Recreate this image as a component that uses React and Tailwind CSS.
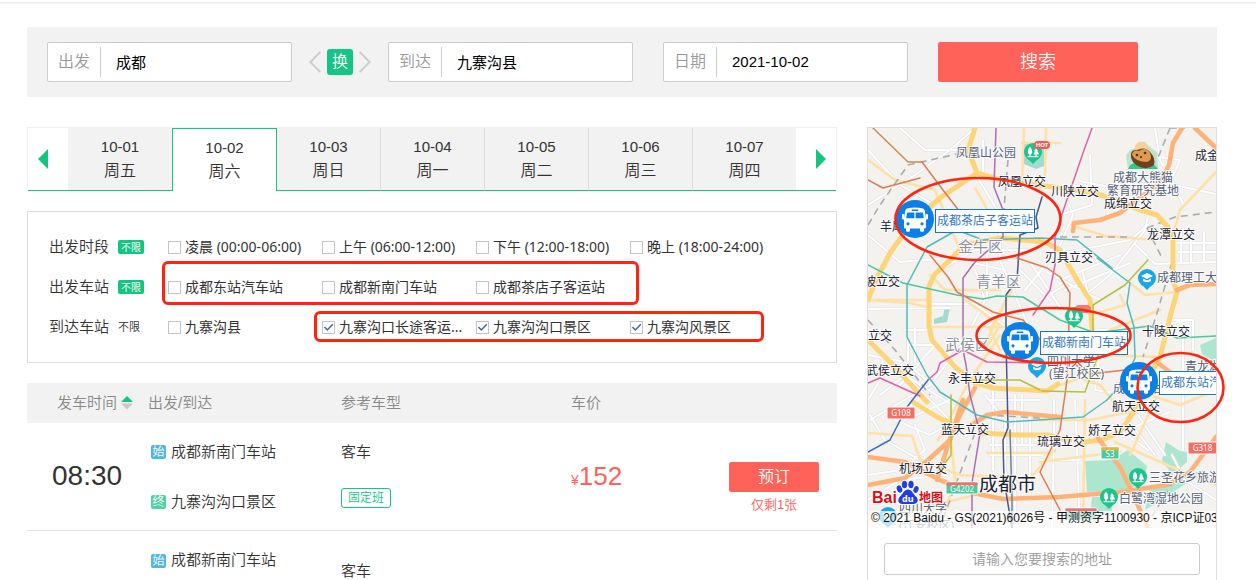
import React, { useState } from "react";

const CJK = "font-['Liberation_Sans','Noto_Sans_CJK_SC',sans-serif]";
const NOTO = "font-['Noto_Sans','Noto_Sans_CJK_SC',sans-serif]";

function Field({ id, label, value }) {
  return (
    <div className="flex h-10 w-[245px] items-center rounded-xs border border-[#ccc] bg-white">
      <label htmlFor={id} className="flex h-[30px] w-[53px] shrink-0 items-center justify-center border-r border-[#ccc] text-base text-[#999]">
        {label}
      </label>
      <input id={id} type="text" defaultValue={value} className="h-full min-w-0 flex-1 bg-transparent pb-[2px] pl-[15px] text-[15px] font-normal text-black outline-none" />
    </div>
  );
}

function Chevron({ d }) {
  return (
    <svg width="12" height="22" viewBox="0 0 12 22" fill="none" stroke="#ccc" strokeWidth="2" aria-hidden="true">
      <path d={d} />
    </svg>
  );
}

function SearchBar() {
  return (
    <form className="flex h-[70px] items-center bg-[#f2f2f2] px-5" onSubmit={(e) => e.preventDefault()}>
      <Field id="from" label="出发" value="成都" />
      <button type="button" aria-label="换" className="flex w-24 items-center justify-center gap-[6px]">
        <Chevron d="M11.3 1 L1.3 11 L11.3 21" />
        <span className="flex size-[26px] items-center justify-center rounded-[3px] bg-[#14c585] text-base text-white">换</span>
        <Chevron d="M0.7 1 L10.7 11 L0.7 21" />
      </button>
      <Field id="to" label="到达" value="九寨沟县" />
      <div className="w-[30px]" />
      <Field id="date" label="日期" value="2021-10-02" />
      <button type="submit" className="ml-[30px] h-10 w-[200px] rounded-xs bg-[#ff6259] text-lg text-white">搜索</button>
    </form>
  );
}

const days = [
  ["10-01", "周五"],
  ["10-02", "周六"],
  ["10-03", "周日"],
  ["10-04", "周一"],
  ["10-05", "周二"],
  ["10-06", "周三"],
  ["10-07", "周四"],
];

function DateTabs() {
  const [active, setActive] = useState(1);
  return (
    <div className="flex h-16 border-x border-t border-[#eee]">
      <button type="button" aria-label="前一天" className="flex w-10 items-center border-b border-[#14c585] pl-[10px]">
        <svg width="10" height="20" viewBox="0 0 10 20" fill="#14c57f"><path d="M0 10 L10 0 V20 Z" /></svg>
      </button>
      <div className="grid flex-1 grid-cols-7">
        {days.map(([date, week], i) => {
          let look = "border-b border-b-[#14c585] bg-[#f2f2f2]";
          if (i === active) look = "border-t border-l border-[#14c585] bg-white";
          else if (i === active + 1) look += " border-l border-l-[#14c585]";
          else if (i > 0) look += " border-l border-l-[#ddd]";
          return (
            <button key={date} type="button" onClick={() => setActive(i)} aria-pressed={i === active} className={"flex flex-col items-center pt-[7px] text-[#333] " + look}>
              <span className="text-[15px] leading-6">{date}</span>
              <span className="text-base leading-6">{week}</span>
            </button>
          );
        })}
      </div>
      <button type="button" aria-label="后一天" className="flex w-10 items-center justify-end border-b border-[#14c585] pr-[10px]">
        <svg width="10" height="20" viewBox="0 0 10 20" fill="#14c57f"><path d="M10 10 L0 0 V20 Z" /></svg>
      </button>
    </div>
  );
}

function Option({ label, checked }) {
  return (
    <label className="flex w-[154px] items-center gap-1">
      <span className="relative flex size-[13px] shrink-0">
        <input type="checkbox" defaultChecked={checked} className="peer size-[13px] appearance-none border border-[#c4c4c4] bg-white" />
        <svg viewBox="0 0 13 13" className="pointer-events-none absolute inset-0 hidden size-[13px] peer-checked:block" fill="none" stroke="#4a64a0" strokeWidth="1.5">
          <path d="M2.5 6 L5.3 9 L10.8 3.2" />
        </svg>
      </span>
      <span className={"text-sm font-normal whitespace-nowrap " + NOTO}>{label}</span>
    </label>
  );
}

function FilterRow({ title, allOn, children }) {
  return (
    <div className="flex h-10 items-center">
      <div className="w-[69px] shrink-0 text-[15px]">{title}</div>
      <div className="w-[50px] shrink-0">
        <button type="button" className={allOn ? "flex h-[14px] w-[26px] items-center justify-center rounded-xs bg-[#14c57f] text-[10px] font-normal text-white" : "block text-[11px] leading-4"}>
          不限
        </button>
      </div>
      <div className="relative flex">{children}</div>
    </div>
  );
}

function Filters() {
  const mark = "pointer-events-none absolute rounded-md border-3 border-[#ff2410]";
  return (
    <section className="mt-5 border border-[#ddd] px-[21px] pt-[15px] pb-[15px] text-[#333]">
      <FilterRow title="出发时段" allOn>
        <Option label="凌晨 (00:00-06:00)" />
        <Option label="上午 (06:00-12:00)" />
        <Option label="下午 (12:00-18:00)" />
        <Option label="晚上 (18:00-24:00)" />
      </FilterRow>
      <FilterRow title="出发车站" allOn>
        <Option label="成都东站汽车站" />
        <Option label="成都新南门车站" />
        <Option label="成都茶店子客运站" />
        <div className={mark + " -top-4 -left-[6px] h-11 w-[477px]"} />
      </FilterRow>
      <FilterRow title="到达车站">
        <Option label="九寨沟县" />
        <Option label="九寨沟口长途客运..." checked />
        <Option label="九寨沟沟口景区" checked />
        <Option label="九寨沟风景区" checked />
        <div className={mark + " -top-[6px] left-[146px] h-[31px] w-[450px]"} />
      </FilterRow>
    </section>
  );
}

function Stop({ tag, name, color }) {
  return (
    <div className="flex h-[22px] items-center gap-[5px] pl-[3px]">
      <span className={"flex h-[14px] w-[15px] items-center justify-center rounded-xs text-xs text-white " + color}>{tag}</span>
      {name}
    </div>
  );
}

function Results() {
  return (
    <table className="mt-5 w-full table-fixed text-left text-[15px] text-[#333]">
      <colgroup>
        <col className="w-[121px]" />
        <col className="w-[193px]" />
        <col className="w-[230px]" />
        <col />
        <col className="w-[108px]" />
      </colgroup>
      <thead>
        <tr className="h-10 bg-[#f2f2f2] text-[#888]">
          <th className="p-0 pl-[30px] font-[350]">
            <button type="button" className="flex items-center gap-1">
              发车时间
              <svg width="12" height="14" viewBox="0 0 12 14" className="shrink-0"><path d="M6 0 L12 6 H0 Z" fill="#14c57f" /><path d="M0 7.5 H12 L6 13.5 Z" fill="#c8c8c8" /></svg>
            </button>
          </th>
          <th className="p-0 font-[350]">出发/到达</th>
          <th className="p-0 font-[350]">参考车型</th>
          <th className="p-0 font-[350]">车价</th>
          <th className="p-0"></th>
        </tr>
      </thead>
      <tbody>
        <tr className="h-[107px] border-b border-[#e6e6e6]">
          <td className="pl-[25px] text-[28px]">08:30</td>
          <td className="align-top pt-[18px]">
            <Stop tag="始" name="成都新南门车站" color="bg-[#4fb5ea]" />
            <div className="h-7" />
            <Stop tag="终" name="九寨沟沟口景区" color="bg-[#4fd3a4]" />
          </td>
          <td className="align-top pt-[18px]">
            <div className="leading-[22px]">客车</div>
            <div className="mt-[25px] flex h-5 w-[50px] items-center justify-center rounded-[3px] border border-[#14c57f] text-xs text-[#14c57f]">固定班</div>
          </td>
          <td className="text-[#ff6259]">
            <span className="text-sm">¥</span><span className="text-[26px]">152</span>
          </td>
          <td className="pr-[18px] text-center align-top pt-[39px]">
            <button type="button" className="block h-[30px] w-full rounded-xs bg-[#ff6259] text-base text-white">预订</button>
            <div className="mt-[3px] text-[13px] leading-5 text-[#ff6259]">仅剩1张</div>
          </td>
        </tr>
        <tr>
          <td></td>
          <td className="align-top pt-[19px]">
            <Stop tag="始" name="成都新南门车站" color="bg-[#4fb5ea]" />
          </td>
          <td className="pt-[29px] leading-[22px]">客车</td>
          <td></td>
          <td></td>
        </tr>
      </tbody>
    </table>
  );
}

/* Map drawing: all coordinates share the map's own view box. */
const BOX = "868 128 348 400";

const minorRoads = [
  "M868 205 L915 175 L950 150 L975 128", "M868 235 L900 262 L950 258 L1005 270", "M900 128 L925 150 L968 150", "M868 150 L900 185 L935 205",
  "M880 270 L905 232 L925 240", "M975 173 L1000 215 L1000 260 L1030 330", "M983 140 V176 H994", "M940 270 L975 250 L1035 250", "M932 304 H975 L1010 330", "M868 309 L950 308",
  "M868 355 L905 362 L950 400 L905 420", "M908 340 V380", "M900 385 L935 345", "M870 420 L930 385 L965 340", "M890 360 L950 420", "M880 395 L905 375 L960 410",
  "M915 328 V362", "M905 330 H930", "M908 345 H935", "M868 400 L885 372", "M1063 190 L1073 215 L1060 245", "M1080 181 L1110 187 L1150 180 L1216 194", "M1090 155 L1092 205 L1060 215",
  "M1155 128 L1160 160 L1172 180 L1185 208", "M1145 155 L1180 160 L1172 178", "M1063 253 L1130 240 L1148 225", "M1148 215 L1145 230 L1110 275 L1085 295", "M1135 244 L1155 264 L1216 262",
  "M1175 243 H1216", "M1178 252 H1216", "M1181 232 V262", "M1191 232 V262", "M1204 232 V262", "M1060 280 L1120 255", "M1065 290 L1130 263", "M1047 272 L1100 300",
  "M1082 270 L1090 300", "M1090 331 L1155 326 L1190 320", "M1172 320 H1193 V350", "M1183 330 V450", "M1100 350 L1095 390 L1130 395", "M985 395 L1005 420 L1005 500", "M1015 395 V520",
  "M993 388 V470", "M1022 395 V445", "M990 400 H1040", "M990 455 H1042", "M990 445 H1040", "M1030 412 V500", "M1054 400 V440 L1052 528", "M868 475 L900 470 L925 450 L915 425", "M868 500 L900 480 L945 475",
  "M870 415 L885 440 L920 460", "M895 420 L930 435 L955 420", "M1128 420 L1155 455", "M1138 415 L1165 455", "M1113 425 L1148 450", "M1127 430 L1170 412", "M1123 422 L1150 400",
  "M1172 455 L1185 480 L1216 500", "M1075 400 L1080 528", "M1040 460 H1080", "M920 500 L960 520 L1040 512", "M955 510 L1010 528", "M975 270 L985 300 L970 330", "M987 255 V300",
  "M1020 270 L1050 300", "M1030 262 L1062 310", "M1025 290 L1048 262", "M1040 300 L1065 285",
];

const lightRoads = [
  "M868 160 L895 180 L935 190 L960 250", "M1024 128 L1022 185", "M1046 128 L1045 175", "M1022 143 H1060", "M975 188 L985 205 L993 225", "M1216 172 L1180 210 L1173 235",
  "M1173 232 L1155 240 L1105 236 L1073 226", "M875 300 H930", "M929 327 H1015", "M868 300 L895 302 L910 303 L930 308", "M965 300 L1000 325 L985 350", "M1006 300 L985 345", "M1017 280 L990 330 L1000 350",
  "M930 275 L945 290 L1000 290", "M1060 350 L1095 355 L1160 357", "M1130 283 L1145 295 L1177 292", "M1090 315 L1125 305 L1120 295", "M1085 345 L1110 330 L1160 310", "M1055 387 L1080 378 L1100 385 L1120 410",
  "M1085 400 L1083 528", "M1040 420 L1090 420 L1140 410", "M1120 452 L1095 455 L1040 462", "M987 453 H1050", "M868 433 L912 436 L920 460 L960 475 L1030 478 L1055 450", "M1115 442 L1190 475 L1216 485",
  "M1155 400 L1130 455", "M1216 390 L1180 405 L1150 395", "M868 520 L935 505 L975 495", "M950 430 L955 480 L940 528", "M938 440 L970 380 L1000 335",
];

const ringRoads = [
  "M975 128 L968 150 L977 173 L940 198 L912 222 L890 253 L875 282 L868 300",
  "M948 262 L935 274 L929 286 V327 L932 340 L955 367 L973 382 L993 388 L1047 391 L1058 384",
  "M977 173 L1000 180 L1060 188 L1090 192 L1107 197 L1140 210 L1157 215 L1168 227 L1173 240 V280 L1177 292 L1170 317 L1160 357 L1147 380 L1133 413 L1120 432 L1102 440 L1083 442",
  "M948 262 L965 245 L1000 238 L1045 242 L1060 250 L1077 280 L1090 300 L1092 330",
  "M870 342 L890 362 L927 402", "M913 402 L937 417 L957 427", "M980 433 L1020 435 L1047 435 L1070 440",
];

const expressways = [
  "M1182 128 L1173 143 L1169 165 L1160 183 L1133 203 L1120 213 L1100 220 L1074 223 L1073 231",
  "M1195 128 L1216 148", "M1177 290 L1190 285 L1216 284", "M1158 363 L1175 376 L1216 384",
  "M868 457 L905 462 L940 480 L973 493 L1003 499 L1060 497 L1083 495 L1120 492 L1167 485 L1190 472 L1216 437",
  "M868 485 L905 478 L927 461 L950 440 L960 415 L975 388", "M937 480 L948 445 L963 400", "M1098 438 L1120 467 L1132 492 L1148 528",
  "M973 424 L987 415 L1005 412 L1060 417",
];

const metro = [
  ["#df62a6", "M1092 128 L1083 153 L1060 220 L1055 237 V265 L1050 290 L1033 315"],
  ["#ab6db3", "M996 128 L994 187 L1003 210 V237 L975 262 L963 278 V350 L966 365 L970 395 L980 433 L972 483 V528"],
  ["#df62a6", "M963 350 L987 362 L1040 363"],
  ["#df62a6", "M868 383 L880 378 L920 396"],
  ["#df62a6", "M963 350 L940 363 L937 372 L928 380"],
  ["#3b6cbe", "M928 380 L907 407 L890 440 L868 452"],
  ["#47568c", "M1042 197 L1036 217 L1038 228 L1020 235 L1017 280 L1006 295 V340 L1008 428 L1003 440 L1004 480 L1012 528"],
  ["#6d8499", "M1010 430 L1012 500 V528"],
  ["#54b9bc", "M1112 268 L1077 240 L1040 238 L983 240 L957 230 L927 247 L907 285 V337 L927 375 L940 392 L953 400 L977 415 L1007 422 L1083 417 L1107 400 L1125 380 L1135 358 L1134 327 L1127 303 L1130 283 L1097 258"],
  ["#4fc79a", "M868 265 L903 283 L957 295 L983 299 L997 296 L1023 297 L1060 320 L1095 333 L1150 326 L1177 338 L1216 336"],
  ["#c98f4e", "M873 128 L908 162 H922"],
  ["#de7b50", "M922 162 L943 190 L960 212 V228"],
  ["#de7b50", "M868 180 L883 188 L920 178"],
  ["#de7b50", "M930 255 L948 277 L957 292 L993 312 L1023 320 L1045 345 L1090 374 L1125 370"],
  ["#de7b50", "M1017 258 L1047 268 L1060 277 L1070 293 L1067 380 L1060 430 L1040 472 L1060 510"],
  ["#b9bf3c", "M1148 260 L1125 285 L1093 305 V345"],
  ["#b9bf3c", "M1042 391 L1085 392 L1100 350"],
  ["#b9bf3c", "M975 380 L1020 380 L1040 390"],
  ["#b9bf3c", "M951 395 V455 L940 470"],
];

const rails = [
  "M1170 128 L1155 165", "M1170 128 L1185 128", "M868 225 L880 205 L908 165 L975 150", "M1060 237 L1127 237", "M1147 228 L1175 217 L1216 212", "M1147 228 L1163 260",
  "M1172 262 L1158 310 L1143 357", "M868 320 L895 350 L930 395", "M975 433 L950 500 L940 528", "M985 415 L1040 418", "M1180 470 L1150 520", "M1008 160 L1003 220",
];

const places = [
  [956, 157, "凤凰山公园", "soft"], [998, 186, "凤凰立交", "hard"], [1051, 196, "川陕立交", "hard"], [1113, 182, "成都大熊猫", "soft"], [1107, 195, "繁育研究基地", "soft"],
  [1104, 208, "成绵立交", "hard"], [1195, 160, "成金立交", "hard"], [1147, 239, "龙潭立交", "hard"], [880, 231, "羊犀立交", "hard"], [1045, 262, "刃具立交", "hard"],
  [864, 286, "坡立交", "hard"], [868, 340, "立交", "hard"], [1157, 282, "成都理工大学", "soft"], [1142, 336, "十陵立交", "hard"], [866, 375, "武侯立交", "hard"],
  [948, 383, "永丰立交", "hard"], [1047, 366, "四川大学", "soft"], [1049, 378, "(望江校区)", "soft"], [1185, 371, "青龙湖", "soft"], [1113, 393, "成都东站", "soft"],
  [1112, 411, "航天立交", "hard"], [1088, 435, "娇子立交", "hard"], [1037, 446, "琉璃立交", "hard"], [941, 434, "蓝天立交", "hard"], [899, 473, "机场立交", "hard"],
  [1149, 482, "三圣花乡旅游区", "soft"], [1119, 503, "白鹭湾湿地公园", "soft"], [899, 513, "四川大学", "soft"], [899, 530, "(江安校区)", "soft"],
];

const districts = [[958, 252, "金牛区"], [976, 287, "青羊区"], [945, 350, "武侯区"]];

function Pin({ x, y, color, kind }) {
  return (
    <g transform={`translate(${x} ${y})`}>
      <path d="M-5 7 L0 12 L5 7 Z" fill={color} />
      <circle r="9" fill={color} />
      {kind === "trees" ? (
        <g fill="#fff">
          <path d="M-3 -5.5 Q-0.5 -3 -0.8 0.5 Q-1.2 2.4 -2.4 2.4 V5 H-3.6 V2.4 Q-5 2.2 -5.2 0 Q-5.2 -3.4 -3 -5.5 Z" />
          <path d="M3 -4 L5 -1 H4.4 L6.2 2.4 H3.6 V5 H2.4 V2.4 H0.6 L1.8 -1 H1.2 Z" />
          <rect x="-5.5" y="4.2" width="11" height="1" />
        </g>
      ) : (
        <g fill="#fff">
          <path d="M-6 -2 L0 -5 L6 -2 L0 1 Z" />
          <path d="M-4 0.4 L0 2.4 L4 0.4 V3 Q0 5.4 -4 3 Z" />
        </g>
      )}
    </g>
  );
}

function Shield({ x, y, w, text, body, top }) {
  return (
    <g>
      <rect x={x} y={y} width={w} height="12" rx="1" fill={body} stroke="#fff" strokeWidth="1" />
      {top && <rect x={x + 0.5} y={y + 0.5} width={w - 1} height="3" fill={top} />}
      {text && <text x={x + w / 2} y={y + (top ? 10 : 9)} fontSize="8" fill="#fff" textAnchor="middle">{text}</text>}
    </g>
  );
}

function Station({ x, y, name, w }) {
  return (
    <g>
      <g transform={`translate(${x} ${y})`}>
        <circle r="19" fill="#0a7fe6" />
        <path d="M-8 -10.5 Q0 -12.5 8 -10.5 Q9.6 -10 9.9 -8 L11 0 V8 Q11 9.6 9.4 9.6 H9 V11.6 Q9 12.8 7.8 12.8 H6.2 Q5 12.8 5 11.6 V9.6 H-5 V11.6 Q-5 12.8 -6.2 12.8 H-7.8 Q-9 12.8 -9 11.6 V9.6 H-9.4 Q-11 9.6 -11 8 V0 L-9.9 -8 Q-9.6 -10 -8 -10.5 Z" fill="#fff" />
        <rect x="-13" y="-5" width="2.4" height="5.5" rx="1" fill="#fff" />
        <rect x="10.6" y="-5" width="2.4" height="5.5" rx="1" fill="#fff" />
        <path d="M-8 -6.4 H-0.6 V-0.8 H-8.8 Z M0.6 -6.4 H8 L8.8 -0.8 H0.6 Z" fill="#0a7fe6" />
        <rect x="-3.5" y="-9.4" width="7" height="1.4" rx="0.7" fill="#0a7fe6" />
        <circle cx="-7" cy="4.8" r="1.6" fill="#0a7fe6" />
        <circle cx="7" cy="4.8" r="1.6" fill="#0a7fe6" />
      </g>
      <rect x={x + 20.5} y={y - 9.5} width={w} height="23" fill="#fff" stroke="#1677bd" />
      <text x={x + 22} y={y + 6} fontSize="12" fill="#3378c4">{name}</text>
    </g>
  );
}

function BaiduLogo() {
  return (
    <g stroke="#fff" strokeWidth="2" paintOrder="stroke" strokeLinejoin="round">
      <text x="872" y="503" fontSize="16" fontWeight="700" fill="#e10a14" className="font-['Liberation_Sans',sans-serif]">Bai</text>
      <g fill="#1f3ee0">
        <ellipse cx="899.5" cy="489" rx="2.7" ry="3.7" transform="rotate(-20 899.5 489)" />
        <ellipse cx="904.5" cy="484.5" rx="2.7" ry="3.8" />
        <ellipse cx="911" cy="484.5" rx="2.7" ry="3.8" />
        <ellipse cx="916" cy="489.5" rx="2.5" ry="3.5" transform="rotate(20 916 489.5)" />
        <path d="M908 489.5 C912 489.5 913 494 916 496.5 C919.5 500 917.5 504 913.5 504 C910 504 906 504 902.5 504 C898 504 897 499.5 900 496.5 C903 494 904 489.5 908 489.5 Z" />
      </g>
      <text x="902" y="502" fontSize="9" fontWeight="700" fill="#fff" stroke="none">du</text>
      <text x="919" y="502" fontSize="12" fontWeight="700" fill="#e10a14">地图</text>
    </g>
  );
}

function CityMap() {
  return (
    <svg viewBox={BOX} className="block h-[400px] w-full font-['Noto_Sans','Noto_Sans_CJK_SC',sans-serif] font-normal" role="img" aria-label="成都市">
      <rect x="868" y="128" width="348" height="400" fill="#f3f2ef" />
      <g fill="#ade6cf">
        <path d="M1085 461 L1112 460 L1128 450 L1147 466 L1144 480 L1128 490 L1087 492 Z" />
        <path d="M1166 442 L1180 451 L1187 452 V462 L1172 475 L1162 460 Z" />
        <path d="M1150 488 L1190 474 L1205 470 L1165 498 L1145 510 Z" />
        <path d="M1200 345 L1216 338 V362 L1202 354 Z" />
        <path d="M1092 497 H1112 V515 H1090 Z" />
      </g>
      <path d="M934 319 L943 316 L945 307 L950 308 L947 322 L934 324 Z M1024 142 H1044 V166 L1036 169 L1024 164 Z" fill="#a3dacf" />
      <g fill="none" strokeLinejoin="round" strokeLinecap="round">
        <g stroke="#e0e1e7" strokeWidth="3.2">{minorRoads.map((d) => <path key={d} d={d} />)}</g>
        <g stroke="#fff" strokeWidth="2">{minorRoads.map((d) => <path key={d} d={d} />)}</g>
        <g stroke="#ffe0a6" strokeWidth="2.6">{lightRoads.map((d) => <path key={d} d={d} />)}</g>
        <g stroke="#a9abae" strokeWidth="1.6" strokeDasharray="7 5" strokeLinecap="butt">{rails.map((d) => <path key={d} d={d} />)}</g>
        <g stroke="#ffd476" strokeWidth="5">{ringRoads.map((d) => <path key={d} d={d} />)}</g>
        <g stroke="#ffb277" strokeWidth="4.6">{expressways.map((d) => <path key={d} d={d} />)}</g>
        <g strokeWidth="1.5">{metro.map(([c, d]) => <path key={d} d={d} stroke={c} />)}</g>
      </g>

      <g>
        <path d="M1126 155 Q1132 147 1136 149 Q1138 140 1145 142 Q1150 148 1157 152 L1158 169 H1128 Z" fill="#bde3cd" />
        <path d="M1134 150 Q1136 140 1143 142 Q1148 146 1149 152 Z" fill="#f8cf97" />
        <path d="M1128 169 Q1132 160 1140 166 Q1150 158 1158 169 Z" fill="#2fc98b" />
        <path d="M1131 157 Q1130 149 1137 150 Q1145 146 1150 152 Q1156 158 1154 165 Q1148 170 1140 167 Q1132 164 1131 157 Z" fill="#6f4120" />
        <path d="M1132 155 Q1133 149 1139 151 Q1146 146 1150 153 Q1153 160 1147 162 Q1136 162 1132 155 Z" fill="#e09a4c" />
        <circle cx="1137" cy="155" r="1.3" fill="#4a2a15" /><circle cx="1145" cy="153" r="1.3" fill="#4a2a15" /><circle cx="1141" cy="157" r="1" fill="#4a2a15" />
      </g>
      <Pin x={1033} y={152} color="#1cc58c" kind="trees" />
      <rect x="1034" y="141" width="16" height="8" rx="4" fill="#f4595a" />
      <text x="1042" y="147" fontSize="6" fontWeight="700" fill="#fff" textAnchor="middle">HOT</text>
      <rect x="1075" y="305" width="16" height="8" rx="4" fill="#f4796f" />
      <Pin x={1074} y={316} color="#1cc58c" kind="trees" />
      <Pin x={1147} y={278} color="#17a7e6" kind="cap" />
      <Pin x={1037} y={366} color="#17a7e6" kind="cap" />
      <Pin x={888} y={516} color="#17a7e6" kind="cap" />
      <Pin x={1138} y={477} color="#1cc58c" kind="trees" />
      <Pin x={1109} y={497} color="#1cc58c" kind="trees" />
      <Shield x={887} y={407} w={28} text="G108" body="#f56e66" />
      <Shield x={946} y={482} w={32} text="G4202" body="#4bc9a0" top="#f56e66" />
      <Shield x={1101} y={447} w={18} text="S3" body="#4bc9a0" top="#e8b53a" />
      <Shield x={1188} y={442} w={29} text="G318" body="#f56e66" />
      <Shield x={1065} y={508} w={32} body="#4bc9a0" top="#f56e66" />

      <g stroke="#fff" strokeWidth="2" strokeOpacity="0.85" paintOrder="stroke" strokeLinejoin="round">
        {districts.map(([x, y, t]) => <text key={t} x={x} y={y} fontSize="15" fill="#8b93a3">{t}</text>)}
        {places.map(([x, y, t, tone]) => <text key={t + y} x={x} y={y} fontSize="12" fill={tone === "hard" ? "#1b2333" : "#55617a"}>{t}</text>)}
        <text x="979" y="491" fontSize="19" fill="#1b2333">成都市</text>
      </g>

      <BaiduLogo />
      <rect x="868" y="511" width="348" height="17" fill="#fff" fillOpacity="0.7" />
      <text x="871" y="522" fontSize="12" fill="#111" className="font-['Liberation_Sans','Noto_Sans_CJK_SC',sans-serif]">© 2021 Baidu - GS(2021)6026号 - 甲测资字1100930 - 京ICP证030173号</text>
      <Station x={915} y={219} name="成都茶店子客运站" w={99} />
      <Station x={1020} y={341} name="成都新南门车站" w={87} />
      <Station x={1139} y={381} name="成都东站汽车站" w={87} />
    </svg>
  );
}

function MapPanel() {
  return (
    <aside className="w-[350px] shrink-0 border border-b-0 border-[#ddd]">
      <div className="relative">
        <CityMap />
        <svg viewBox={BOX} className="pointer-events-none absolute inset-0 h-[400px] w-full overflow-visible" fill="none" stroke="#ff2410" strokeWidth="2.6" aria-hidden="true">
          <ellipse cx="978" cy="219" rx="82.5" ry="41" />
          <ellipse cx="1053.5" cy="335.5" rx="77" ry="27.5" />
          <ellipse cx="1180.5" cy="387.5" rx="43" ry="34.5" />
        </svg>
      </div>
      <div className="px-4 pt-[15px]">
        <input type="text" aria-label="地址" placeholder="请输入您要搜索的地址" className="h-8 w-full rounded-[3px] border border-[#ccc] text-center text-sm outline-none placeholder:text-[#999]" />
      </div>
    </aside>
  );
}

export default function App() {
  return (
    <div className={"min-h-screen bg-white font-[350] " + CJK}>
      <div className="h-[27px] pt-[2px]"><div className="h-[2px] border-t border-[#ebebeb] bg-[#f7f7f7]" /></div>
      <div className="pr-[39px] pl-[27px]">
        <SearchBar />
        <div className="mt-[30px] flex gap-[30px]">
          <main className="min-w-0 flex-1">
            <DateTabs />
            <Filters />
            <Results />
          </main>
          <MapPanel />
        </div>
      </div>
    </div>
  );
}
